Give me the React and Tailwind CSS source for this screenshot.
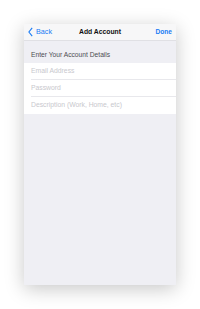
import React from "react";

const fields = ["Email Address", "Password", "Description (Work, Home, etc)"];

export default function App() {
  return (
    <div className="w-[200px] h-[309px] bg-white pt-[24px] px-[24px] font-['Liberation_Sans',Arial,sans-serif]">
      <div className="w-[152px] h-[261px] bg-[#efeff4] shadow-[0_4px_18px_rgba(0,0,0,0.22)] flex flex-col">
        {/* nav bar */}
        <div className="h-[17px] bg-[#f7f7f8] border-b border-[#e0e0e4] flex items-center justify-between pl-[4px] pr-[4px] relative">
          <button className="flex items-center gap-[2px] text-[#1a7cf5] text-[7.2px] leading-none">
            <svg width="5" height="10" viewBox="0 0 5 10" className="shrink-0">
              <path d="M4.2 0.8 L0.9 5 L4.2 9.2" fill="none" stroke="#1a7cf5" strokeWidth="1.1" />
            </svg>
            <span className="ml-[1px]">Back</span>
          </button>
          <span className="absolute left-0 right-0 text-center text-[6.8px] font-bold text-[#111] leading-none pointer-events-none">
            Add Account
          </span>
          <button className="text-[#1a7cf5] text-[6.6px] font-bold leading-none">Done</button>
        </div>

        {/* section header */}
        <div className="h-[22px] flex items-end pl-[7px] pb-[4px]">
          <span className="text-[6.7px] text-[#4d4d52] leading-none">Enter Your Account Details</span>
        </div>

        {/* fields */}
        <div className="bg-white">
          {fields.map((f, i) => (
            <div key={f} className="pl-[7px]">
              <div
                className={`h-[17px] flex items-center ${i < fields.length - 1 ? "border-b border-[#e8e8ec]" : ""}`}
              >
                <span className="text-[6.8px] text-[#c8c8cd] leading-none">{f}</span>
              </div>
            </div>
          ))}
        </div>
      </div>
    </div>
  );
}
